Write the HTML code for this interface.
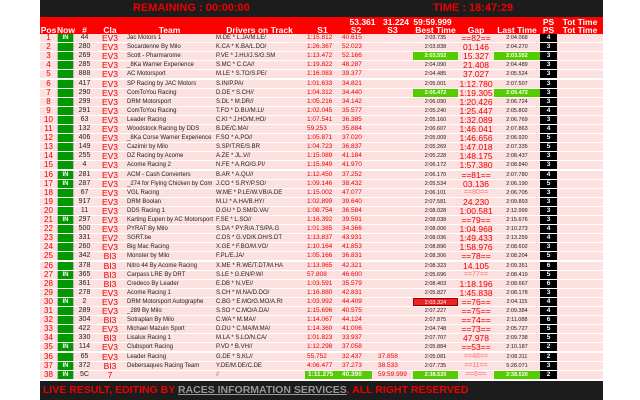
<!DOCTYPE html>
<html><head><meta charset="utf-8"><style>
*{margin:0;padding:0;box-sizing:border-box}
body{width:640px;height:400px;background:#fff;position:relative;overflow:hidden;font-family:"Liberation Sans",Arial,sans-serif}
.top{position:absolute;left:40px;top:0;width:563px;height:17px;background:#1c1c1c;color:#e00;font-weight:bold;font-size:11px;line-height:17px}
.hd{position:absolute;left:40px;top:17px;width:563px;height:17px;background:#f00;color:#fff;font-weight:bold;font-size:8.5px}
.hd span{position:absolute;text-align:center;line-height:8px}
.r{position:absolute;left:40px;width:563px;height:9.1px;background:#fde0e0;border-bottom:1px solid #fff;display:flex;font-size:6px;line-height:8px;color:#222}
.r>span{display:block;height:8px;overflow:hidden;white-space:nowrap}
.p{width:17px;text-align:center;color:#e00;font-size:8px}
.n{width:17px;background:#090;color:#fff;text-align:center;font-weight:bold;font-size:6px;border-left:1px solid #bbb;border-right:1px solid #bbb}
.h{width:21px;text-align:center;font-size:7px}
.c{width:30px;text-align:center;color:#e00;font-size:8.5px}
.t{width:89px;padding-left:2px}
.d{width:91px;padding-left:2px}
.s1{width:35px;padding-left:2px;color:#e00;font-size:6.5px}
.s2{width:32px;padding-left:2px;color:#e00;font-size:6.5px}
.s3{width:41px;padding-left:6px;color:#e00;font-size:6.5px}
.b{width:45px;text-align:center;font-size:5.5px}
.g{width:36px;text-align:center;color:#e00;font-size:8.5px}
.g.f{color:#f77;font-size:7px}
.l{width:46px;text-align:center;font-size:5.5px}
.ps{width:17px;background:#000;color:#fff;text-align:center;font-weight:bold;font-size:6.5px}
.gr{background:#5c0;color:#fff!important;font-weight:bold}
.rd{background:#e22;color:#fff;border:1px solid #900}
.ft{position:absolute;left:40px;top:381px;width:563px;height:19px;background:#1c1c1c;color:#e00;font-weight:bold;font-size:10.5px;line-height:19px;padding-left:3px}
.ft u{color:#999}
</style></head><body>
<div class="top"><span style="position:absolute;left:93px">REMAINING : 00:00:00</span><span style="position:absolute;left:393px">TIME : 18:47:29</span></div>
<div class="hd">
<span style="left:305px;width:35px;top:1px">53.361</span><span style="left:340px;width:32px;top:1px">31.224</span><span style="left:372px;width:41px;top:1px">59:59.999</span><span style="left:500px;width:17px;top:1px">PS</span><span style="left:517px;width:46px;top:1px">Tot Time</span>
<span style="left:0;width:17px;top:9px">Pos</span><span style="left:17px;width:17px;top:9px">Now</span><span style="left:34px;width:21px;top:9px">#</span><span style="left:55px;width:30px;top:9px">Cla</span><span style="left:85px;width:89px;top:9px">Team</span><span style="left:174px;width:91px;top:9px">Drivers on Track</span><span style="left:265px;width:35px;top:9px">S1</span><span style="left:300px;width:32px;top:9px">S2</span><span style="left:332px;width:41px;top:9px">S3</span><span style="left:373px;width:45px;top:9px">Best Time</span><span style="left:418px;width:36px;top:9px">Gap</span><span style="left:454px;width:46px;top:9px">Last Time</span><span style="left:500px;width:17px;top:9px">PS</span><span style="left:517px;width:46px;top:9px">Tot Time</span>
</div>
<div id="rows"></div>
<div class="ft">LIVE RESULT, EDITING BY <u>RACES INFORMATION SERVICES</u>, ALL RIGHT RESERVED</div>
<div style="position:absolute;left:0;top:0">
<div class="r" style="top:34.0px"><span class="p">1</span><span class="n">IN</span><span class="h">44</span><span class="c">EV3</span><span class="t">Jac Motors 1</span><span class="d">M.DE * L.JA/M.LE/</span><span class="s1">1:15.812</span><span class="s2">40.615</span><span class="s3"></span><span class="b">2:03.735</span><span class="g">==82==</span><span class="l">2:04.068</span><span class="ps">4</span></div>
<div class="r" style="top:43.1px"><span class="p">2</span><span class="n"></span><span class="h">280</span><span class="c">EV3</span><span class="t">Socardenne By Milo</span><span class="d">K.CA * K.BA/L.DO/</span><span class="s1">1:26.367</span><span class="s2">52.023</span><span class="s3"></span><span class="b">2:03.838</span><span class="g">01.146</span><span class="l">2:04.270</span><span class="ps">3</span></div>
<div class="r" style="top:52.2px"><span class="p">3</span><span class="n"></span><span class="h">269</span><span class="c">EV3</span><span class="t">Scott - Pharmarome</span><span class="d">P.VE * J.HU/J.S/G.SM</span><span class="s1">1:13.472</span><span class="s2">52.166</span><span class="s3"></span><span class="b gr">2:03.552</span><span class="g">15.327</span><span class="l gr">2:03.552</span><span class="ps">3</span></div>
<div class="r" style="top:61.3px"><span class="p">4</span><span class="n"></span><span class="h">285</span><span class="c">EV3</span><span class="t">_8Ka Warner Experience</span><span class="d">S.MC * C.CA//</span><span class="s1">1:19.822</span><span class="s2">48.287</span><span class="s3"></span><span class="b">2:04.090</span><span class="g">21.408</span><span class="l">2:04.489</span><span class="ps">3</span></div>
<div class="r" style="top:70.4px"><span class="p">5</span><span class="n"></span><span class="h">888</span><span class="c">EV3</span><span class="t">AC Motorsport</span><span class="d">M.LE * S.TO/S.PE/</span><span class="s1">1:16.083</span><span class="s2">39.377</span><span class="s3"></span><span class="b">2:04.485</span><span class="g">37.027</span><span class="l">2:05.524</span><span class="ps">3</span></div>
<div class="r" style="top:79.5px"><span class="p">6</span><span class="n"></span><span class="h">417</span><span class="c">EV3</span><span class="t">SP Racing by JAC Motors</span><span class="d">S.IN/P.PA/</span><span class="s1">1:01.633</span><span class="s2">34.821</span><span class="s3"></span><span class="b">2:05.001</span><span class="g">1:12.780</span><span class="l">2:07.507</span><span class="ps">3</span></div>
<div class="r" style="top:88.6px"><span class="p">7</span><span class="n"></span><span class="h">290</span><span class="c">EV3</span><span class="t">ComToYou Racing</span><span class="d">D.DE * S.CH//</span><span class="s1">1:04.312</span><span class="s2">34.440</span><span class="s3"></span><span class="b gr">2:05.472</span><span class="g">1:19.305</span><span class="l gr">2:05.472</span><span class="ps">3</span></div>
<div class="r" style="top:97.7px"><span class="p">8</span><span class="n"></span><span class="h">299</span><span class="c">EV3</span><span class="t">DRM Motorsport</span><span class="d">S.DL * M.DR//</span><span class="s1">1:05.216</span><span class="s2">34.142</span><span class="s3"></span><span class="b">2:06.090</span><span class="g">1:20.426</span><span class="l">2:06.724</span><span class="ps">3</span></div>
<div class="r" style="top:106.8px"><span class="p">9</span><span class="n"></span><span class="h">291</span><span class="c">EV3</span><span class="t">ComToYou Racing</span><span class="d">T.FO * D.BU/M.LI/</span><span class="s1">1:02.045</span><span class="s2">35.577</span><span class="s3"></span><span class="b">2:05.240</span><span class="g">1:25.447</span><span class="l">2:05.802</span><span class="ps">4</span></div>
<div class="r" style="top:115.9px"><span class="p">10</span><span class="n"></span><span class="h">63</span><span class="c">EV3</span><span class="t">Leader Racing</span><span class="d">C.KI * J.HO/M.HO/</span><span class="s1">1:07.541</span><span class="s2">36.385</span><span class="s3"></span><span class="b">2:05.160</span><span class="g">1:32.089</span><span class="l">2:06.769</span><span class="ps">3</span></div>
<div class="r" style="top:125.0px"><span class="p">11</span><span class="n"></span><span class="h">132</span><span class="c">EV3</span><span class="t">Woodstock Racing by DDS</span><span class="d">B.DE/C.MA/</span><span class="s1">59.253</span><span class="s2">35.884</span><span class="s3"></span><span class="b">2:06.607</span><span class="g">1:46.041</span><span class="l">2:07.863</span><span class="ps">4</span></div>
<div class="r" style="top:134.1px"><span class="p">12</span><span class="n"></span><span class="h">406</span><span class="c">EV3</span><span class="t">_8Ka Corse Warner Experience</span><span class="d">F.SO * A.PO//</span><span class="s1">1:05.871</span><span class="s2">37.020</span><span class="s3"></span><span class="b">2:05.009</span><span class="g">1:46.656</span><span class="l">2:06.920</span><span class="ps">5</span></div>
<div class="r" style="top:143.2px"><span class="p">13</span><span class="n"></span><span class="h">149</span><span class="c">EV3</span><span class="t">Cazimir by Milo</span><span class="d">S.SP/T.RE/S.BR</span><span class="s1">1:04.723</span><span class="s2">36.837</span><span class="s3"></span><span class="b">2:05.269</span><span class="g">1:47.018</span><span class="l">2:07.335</span><span class="ps">5</span></div>
<div class="r" style="top:152.3px"><span class="p">14</span><span class="n"></span><span class="h">255</span><span class="c">EV3</span><span class="t">DZ Racing by Acome</span><span class="d">A.ZE * JL.V//</span><span class="s1">1:15.089</span><span class="s2">41.184</span><span class="s3"></span><span class="b">2:05.228</span><span class="g">1:48.175</span><span class="l">2:08.437</span><span class="ps">3</span></div>
<div class="r" style="top:161.4px"><span class="p">15</span><span class="n"></span><span class="h">4</span><span class="c">EV3</span><span class="t">Acome Racing 2</span><span class="d">N.FE * A.RO/G.PI/</span><span class="s1">1:15.949</span><span class="s2">41.970</span><span class="s3"></span><span class="b">2:06.172</span><span class="g">1:57.380</span><span class="l">2:08.840</span><span class="ps">3</span></div>
<div class="r" style="top:170.5px"><span class="p">16</span><span class="n">IN</span><span class="h">281</span><span class="c">EV3</span><span class="t">ACM - Cash Converters</span><span class="d">B.AR * A.QU//</span><span class="s1">1:12.450</span><span class="s2">37.252</span><span class="s3"></span><span class="b">2:06.170</span><span class="g">==81==</span><span class="l">2:07.780</span><span class="ps">4</span></div>
<div class="r" style="top:179.6px"><span class="p">17</span><span class="n">IN</span><span class="h">287</span><span class="c">EV3</span><span class="t">_274 for Flying Chicken by Com</span><span class="d">J.CO * S.RY/P.SO/</span><span class="s1">1:09.146</span><span class="s2">38.432</span><span class="s3"></span><span class="b">2:05.534</span><span class="g">03.136</span><span class="l">2:06.190</span><span class="ps">5</span></div>
<div class="r" style="top:188.7px"><span class="p">18</span><span class="n"></span><span class="h">67</span><span class="c">EV3</span><span class="t">VGL Racing</span><span class="d">W.ME * P.LE/W.VB/A.DE</span><span class="s1">1:15.002</span><span class="s2">47.077</span><span class="s3"></span><span class="b">2:06.101</span><span class="g f">==80==</span><span class="l">2:06.705</span><span class="ps">3</span></div>
<div class="r" style="top:197.8px"><span class="p">19</span><span class="n"></span><span class="h">917</span><span class="c">EV3</span><span class="t">DRM Boolan</span><span class="d">M.LI * A.HA/B.HY/</span><span class="s1">1:02.899</span><span class="s2">39.640</span><span class="s3"></span><span class="b">2:07.581</span><span class="g">24.230</span><span class="l">2:09.893</span><span class="ps">3</span></div>
<div class="r" style="top:206.9px"><span class="p">20</span><span class="n"></span><span class="h">11</span><span class="c">EV3</span><span class="t">DDS Racing 1</span><span class="d">D.GU * D.SM/D.VA/</span><span class="s1">1:08.754</span><span class="s2">36.584</span><span class="s3"></span><span class="b">2:08.028</span><span class="g">1:00.581</span><span class="l">2:12.999</span><span class="ps">3</span></div>
<div class="r" style="top:216.0px"><span class="p">21</span><span class="n">IN</span><span class="h">297</span><span class="c">EV3</span><span class="t">Karting Eupen by AC Motorsport</span><span class="d">F.SE * L.SO//</span><span class="s1">1:16.392</span><span class="s2">39.591</span><span class="s3"></span><span class="b">2:08.038</span><span class="g">==79==</span><span class="l">2:15.676</span><span class="ps">3</span></div>
<div class="r" style="top:225.1px"><span class="p">22</span><span class="n"></span><span class="h">500</span><span class="c">EV3</span><span class="t">PYRAT By Milo</span><span class="d">S.DA * PY.R/A.TS/PA.G</span><span class="s1">1:01.385</span><span class="s2">34.366</span><span class="s3"></span><span class="b">2:08.006</span><span class="g">1:04.968</span><span class="l">2:10.273</span><span class="ps">4</span></div>
<div class="r" style="top:234.2px"><span class="p">23</span><span class="n"></span><span class="h">331</span><span class="c">EV2</span><span class="t">SGRT.be</span><span class="d">C.DS * G.VD/K.DH/S.DT</span><span class="s1">1:13.837</span><span class="s2">43.931</span><span class="s3"></span><span class="b">2:08.036</span><span class="g">1:49.433</span><span class="l">2:13.259</span><span class="ps">4</span></div>
<div class="r" style="top:243.3px"><span class="p">24</span><span class="n"></span><span class="h">260</span><span class="c">EV3</span><span class="t">Big Mac Racing</span><span class="d">X.GE * F.BO/M.VO/</span><span class="s1">1:10.164</span><span class="s2">41.853</span><span class="s3"></span><span class="b">2:08.896</span><span class="g">1:58.976</span><span class="l">2:08.602</span><span class="ps">3</span></div>
<div class="r" style="top:252.4px"><span class="p">25</span><span class="n"></span><span class="h">342</span><span class="c">BI3</span><span class="t">Monster by Milo</span><span class="d">F.PL/E.JA/</span><span class="s1">1:05.166</span><span class="s2">36.831</span><span class="s3"></span><span class="b">2:08.306</span><span class="g">==78==</span><span class="l">2:08.204</span><span class="ps">5</span></div>
<div class="r" style="top:261.5px"><span class="p">26</span><span class="n"></span><span class="h">378</span><span class="c">BI3</span><span class="t">Nitro 44 By Acome Racing</span><span class="d">X.ME * R.WE/T.DT/M.HA</span><span class="s1">1:13.965</span><span class="s2">42.321</span><span class="s3"></span><span class="b">2:08.323</span><span class="g">14.105</span><span class="l">2:09.351</span><span class="ps">6</span></div>
<div class="r" style="top:270.6px"><span class="p">27</span><span class="n">IN</span><span class="h">365</span><span class="c">BI3</span><span class="t">Carpass LRE By DRT</span><span class="d">S.LE * G.EN/P.W/</span><span class="s1">57.808</span><span class="s2">46.600</span><span class="s3"></span><span class="b">2:05.696</span><span class="g f">==77==</span><span class="l">2:08.419</span><span class="ps">5</span></div>
<div class="r" style="top:279.7px"><span class="p">28</span><span class="n"></span><span class="h">361</span><span class="c">BI3</span><span class="t">Credeco By Leader</span><span class="d">E.DB * N.VE//</span><span class="s1">1:03.591</span><span class="s2">35.579</span><span class="s3"></span><span class="b">2:08.403</span><span class="g">1:18.196</span><span class="l">2:08.667</span><span class="ps">6</span></div>
<div class="r" style="top:288.8px"><span class="p">29</span><span class="n"></span><span class="h">278</span><span class="c">EV3</span><span class="t">Acome Racing 1</span><span class="d">S.CH * M.NA/D.DO/</span><span class="s1">1:16.880</span><span class="s2">42.831</span><span class="s3"></span><span class="b">2:05.827</span><span class="g">1:45.838</span><span class="l">2:08.178</span><span class="ps">3</span></div>
<div class="r" style="top:297.9px"><span class="p">30</span><span class="n">IN</span><span class="h">2</span><span class="c">EV3</span><span class="t">DRM Motorsport Autographe</span><span class="d">C.BG * E.MO/G.MO/A.RI</span><span class="s1">1:03.992</span><span class="s2">44.409</span><span class="s3"></span><span class="b rd">2:03.324</span><span class="g">==76==</span><span class="l">2:04.115</span><span class="ps">4</span></div>
<div class="r" style="top:307.0px"><span class="p">31</span><span class="n"></span><span class="h">289</span><span class="c">EV3</span><span class="t">_289 By Milo</span><span class="d">S.SO * C.MO/A.DA/</span><span class="s1">1:15.696</span><span class="s2">40.575</span><span class="s3"></span><span class="b">2:07.227</span><span class="g">==75==</span><span class="l">2:09.384</span><span class="ps">4</span></div>
<div class="r" style="top:316.1px"><span class="p">32</span><span class="n"></span><span class="h">304</span><span class="c">BI3</span><span class="t">Sotraplan By Milo</span><span class="d">C.WA * M.MA//</span><span class="s1">1:14.067</span><span class="s2">44.124</span><span class="s3"></span><span class="b">2:07.875</span><span class="g">==74==</span><span class="l">2:11.088</span><span class="ps">6</span></div>
<div class="r" style="top:325.2px"><span class="p">33</span><span class="n"></span><span class="h">422</span><span class="c">EV3</span><span class="t">Michael Mazuin Sport</span><span class="d">D.DU * C.MA/M.MA/</span><span class="s1">1:14.360</span><span class="s2">41.006</span><span class="s3"></span><span class="b">2:04.748</span><span class="g">==73==</span><span class="l">2:05.727</span><span class="ps">5</span></div>
<div class="r" style="top:334.3px"><span class="p">34</span><span class="n"></span><span class="h">330</span><span class="c">BI3</span><span class="t">Lisalux Racing 1</span><span class="d">M.LA * S.LO/N.CA/</span><span class="s1">1:01.823</span><span class="s2">33.937</span><span class="s3"></span><span class="b">2:07.707</span><span class="g">47.978</span><span class="l">2:09.738</span><span class="ps">5</span></div>
<div class="r" style="top:343.4px"><span class="p">35</span><span class="n">IN</span><span class="h">114</span><span class="c">EV3</span><span class="t">Clubsport Racing</span><span class="d">P.VD * B.VH//</span><span class="s1">1:12.298</span><span class="s2">37.058</span><span class="s3"></span><span class="b">2:05.884</span><span class="g">==53==</span><span class="l">2:10.187</span><span class="ps">2</span></div>
<div class="r" style="top:352.5px"><span class="p">36</span><span class="n"></span><span class="h">65</span><span class="c">EV3</span><span class="t">Leader Racing</span><span class="d">G.DE * S.KL//</span><span class="s1">55.752</span><span class="s2">32.437</span><span class="s3">37.858</span><span class="b">2:05.081</span><span class="g f">==48==</span><span class="l">2:08.311</span><span class="ps">2</span></div>
<div class="r" style="top:361.6px"><span class="p">37</span><span class="n">IN</span><span class="h">372</span><span class="c">BI3</span><span class="t">Debersaques Racing Team</span><span class="d">Y.DE/M.DE/C.DE</span><span class="s1">4:06.477</span><span class="s2">37.273</span><span class="s3">38.533</span><span class="b">2:07.735</span><span class="g f">==11==</span><span class="l">5:28.071</span><span class="ps">3</span></div>
<div class="r" style="top:370.7px"><span class="p">38</span><span class="n">IN</span><span class="h">5C</span><span class="c">7</span><span class="t"></span><span class="d" style="color:#888">//</span><span class="s1 gr" style="padding-left:3px">1:11.275</span><span class="s2 gr">40.390</span><span class="s3">59:59.999</span><span class="b gr">2:38.520</span><span class="g f">==6==</span><span class="l gr">2:38.520</span><span class="ps">2</span></div>
</div>
</body></html>
